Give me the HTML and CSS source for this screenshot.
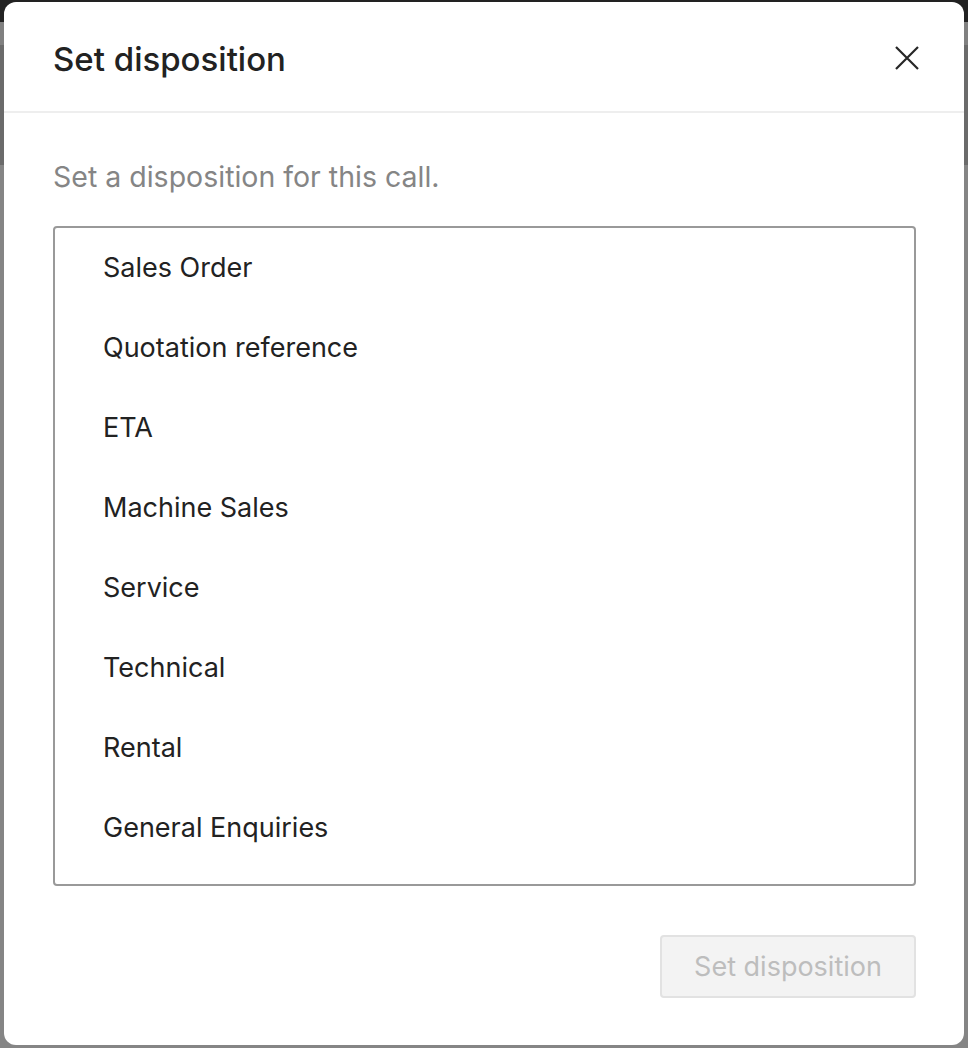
FILE: index.html
```html
<!DOCTYPE html>
<html lang="en">
<head>
    <meta charset="UTF-8">
    <meta name="viewport" content="width=device-width, initial-scale=1.0">
    <title>Set disposition</title>
    <link rel="stylesheet" href="styles.css">
</head>
<body>
    <!-- dimmed app behind the dialog -->
    <div class="backdrop">
        <div class="app-topbar"></div>
        <div class="app-band"></div>
        <div class="app-rest"></div>
    </div>

    <div class="modal" role="dialog" aria-labelledby="modalTitle">
        <div class="modal-header">
            <h2 id="modalTitle">Set disposition</h2>
            <button class="close-btn" aria-label="Close">
                <svg width="24" height="24" viewBox="0 0 24 24">
                    <path d="M1 1 L23 23 M23 1 L1 23" stroke="#262626" stroke-width="2.2" fill="none"/>
                </svg>
            </button>
        </div>
        <div class="modal-body">
            <p class="hint">Set a disposition for this call.</p>
            <ul class="disposition-list">
                <li>Sales Order</li>
                <li>Quotation reference</li>
                <li>ETA</li>
                <li>Machine Sales</li>
                <li>Service</li>
                <li>Technical</li>
                <li>Rental</li>
                <li>General Enquiries</li>
            </ul>
        </div>
        <div class="modal-footer">
            <button class="submit-btn" disabled>Set disposition</button>
        </div>
    </div>
</body>
</html>
```

FILE: styles.css
```css
body {
    margin: 0;
    font-family: Inter, "Open Sans", sans-serif;
    background-color: #808080;
    height: 100vh;
    overflow: hidden;
}

.backdrop {
    display: flex;
    flex-direction: column;
    height: 100%;
}

.app-topbar {
    height: 22px;
    background-color: #222;
}

.app-band {
    height: 120px;
    margin-top: 23px;
    background-color: #6b6b6b;
}

.app-rest {
    flex: 1;
    background-color: #858585;
}

.modal {
    position: absolute;
    top: 2px;
    left: 4px;
    width: 960px;
    height: 1043px;
    background-color: #fff;
    border-radius: 12px;
    display: flex;
    flex-direction: column;
    box-sizing: border-box;
}

.modal-header {
    display: flex;
    align-items: center;
    justify-content: space-between;
    height: 111px;
    padding: 0 45px 0 49px;
    border-bottom: 2px solid #eee;
    box-sizing: border-box;
}

.modal-header h2 {
    margin: 4px 0 0;
    font-size: 33px;
    line-height: 40px;
    font-weight: 500;
    color: #222;
}

.close-btn {
    background: none;
    border: none;
    padding: 0;
    margin-top: 3px;
    cursor: pointer;
    display: flex;
}

.modal-body {
    padding: 0 48px 0 49px;
}

.hint {
    margin: 47px 0 32px;
    font-size: 28.5px;
    line-height: 34px;
    color: #858585;
}

.disposition-list {
    list-style: none;
    margin: 0;
    padding: 0 0 16px;
    border: 2px solid #999;
    border-radius: 4px;
}

.disposition-list li {
    height: 80px;
    line-height: 80px;
    padding-left: 48px;
    font-size: 27px;
    color: #222;
}

.modal-footer {
    display: flex;
    justify-content: flex-end;
    padding: 49px 48px 0;
}

.submit-btn {
    width: 256px;
    height: 63px;
    font-family: inherit;
    font-size: 27px;
    color: #bdbdbd;
    background-color: #f3f3f3;
    border: 2px solid #e2e2e2;
    border-radius: 4px;
}
```
